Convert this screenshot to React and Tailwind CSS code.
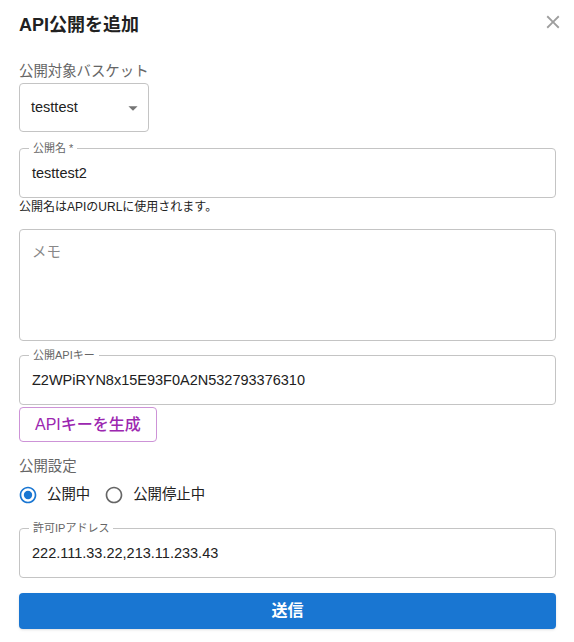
import React from 'react';

// Outlined field with the label sitting on the top border
const Field = ({ label, value, className = '' }) => (
  <div className={`relative h-[50px] rounded-[4px] border border-[#c4c4c4] flex items-center px-[12px] ${className}`}>
    <span className="absolute -top-[7px] left-[9px] px-[4px] bg-white text-[11px] leading-[13px] text-[#666]">
      {label}
    </span>
    <span className="text-[14.5px] leading-[23px] text-[#212121]">{value}</span>
  </div>
);

const RadioIcon = ({ checked }) => (
  <svg viewBox="0 0 24 24" className="w-[20px] h-[20px] shrink-0" fill={checked ? '#1976d2' : '#666666'}>
    <path d="M12 2C6.48 2 2 6.48 2 12s4.48 10 10 10 10-4.48 10-10S17.52 2 12 2zm0 18c-4.42 0-8-3.58-8-8s3.58-8 8-8 8 3.58 8 8-3.58 8-8 8z" />
    {checked && <circle cx="12" cy="12" r="5" />}
  </svg>
);

const App = () => {
  return (
    <div
      className="w-[574px] h-[642px] bg-white pl-[19px] pr-[18px] flex flex-col"
      style={{ fontFamily: '"Liberation Sans", "Noto Sans CJK JP", sans-serif' }}
    >
      {/* Title */}
      <div className="pt-[9px] flex justify-between items-start">
        <h2 className="text-[18px] leading-[32px] font-bold text-[#212121]">API公開を追加</h2>
        <svg viewBox="0 0 24 24" className="w-[22px] h-[22px] mt-[2px] -mr-[8px]" fill="#9e9e9e">
          <path d="M19 6.41 17.59 5 12 10.59 6.41 5 5 6.41 10.59 12 5 17.59 6.41 19 12 13.41 17.59 19 19 17.59 13.41 12z" />
        </svg>
      </div>

      {/* Basket select */}
      <div className="mt-[18px] text-[14.4px] leading-[24px] text-[#666]">公開対象バスケット</div>
      <div className="w-[130px] h-[49px] rounded-[4px] border border-[#c4c4c4] flex items-center justify-between pl-[11px] pr-[4px]">
        <span className="text-[14.5px] text-[#212121]">testtest</span>
        <svg viewBox="0 0 24 24" className="w-[22px] h-[22px]" fill="#757575">
          <path d="M7 10l5 5 5-5z" />
        </svg>
      </div>

      <Field className="mt-[16px]" label="公開名 *" value="testtest2" />
      <div className="mt-[1px] text-[12px] leading-[16px] text-[#222]">公開名はAPIのURLに使用されます。</div>

      {/* Memo */}
      <div className="mt-[14px] h-[112px] rounded-[4px] border border-[#c4c4c4] px-[12px] pt-[10px]">
        <span className="text-[14.4px] leading-[23px] text-[#888]">メモ</span>
      </div>

      <Field className="mt-[14px]" label="公開APIキー" value="Z2WPiRYN8x15E93F0A2N532793376310" />
      <button className="mt-[2px] self-start h-[35px] px-[15px] rounded-[4px] border border-[#cd93d7] text-[16px] font-medium text-[#9c27b0]">
        APIキーを生成
      </button>

      {/* Publish status */}
      <div className="mt-[12px] text-[14.4px] leading-[24px] text-[#666]">公開設定</div>
      <div className="mt-[2px] h-[30px] flex items-center text-[14.4px] text-[#212121]">
        <div className="-ml-[1px]"><RadioIcon checked /></div>
        <span className="ml-[9px]">公開中</span>
        <div className="ml-[14px]"><RadioIcon /></div>
        <span className="ml-[9px]">公開停止中</span>
      </div>

      <Field className="mt-[18px]" label="許可IPアドレス" value="222.111.33.22,213.11.233.43" />

      <button className="mt-[15px] h-[36px] rounded-[4px] bg-[#1976d2] text-white text-[16px] font-bold shadow-sm">
        送信
      </button>
    </div>
  );
};

export default App;
